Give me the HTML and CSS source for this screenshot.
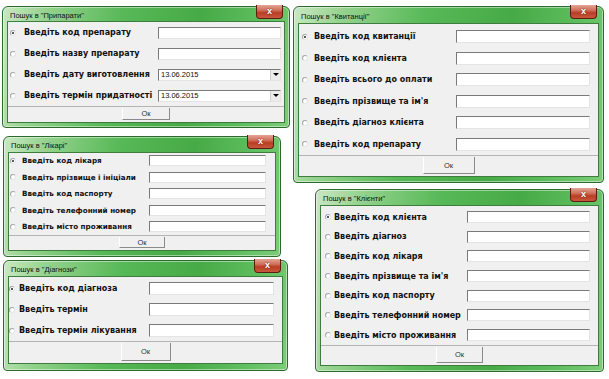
FILE: index.html
```html
<!DOCTYPE html>
<html lang="uk">
<head>
    <meta charset="UTF-8">
    <title>Пошук</title>
    <link rel="stylesheet" href="styles.css">
</head>
<body>
<div class="desktop">

    <section class="win win-prep">
        <header class="titlebar">
            <span class="title">Пошук в "Припарати"</span>
            <span class="close">x</span>
        </header>
        <div class="client">
            <div class="rows">
                <div class="row"><span class="radio checked"></span><span class="lbl">Введіть код препарату</span><span class="field"></span></div>
                <div class="row"><span class="radio"></span><span class="lbl">Введіть назву препарату</span><span class="field"></span></div>
                <div class="row"><span class="radio"></span><span class="lbl">Введіть дату виготовлення</span><span class="field combo"><span class="val">13.06.2015</span><span class="drop"></span></span></div>
                <div class="row"><span class="radio"></span><span class="lbl">Введіть термін придатності</span><span class="field combo"><span class="val">13.06.2015</span><span class="drop"></span></span></div>
            </div>
            <div class="footer"><span class="btn">Ок</span></div>
        </div>
    </section>

    <section class="win win-kvyt">
        <header class="titlebar">
            <span class="title">Пошук в "Квитанції"</span>
            <span class="close">x</span>
        </header>
        <div class="client">
            <div class="rows">
                <div class="row"><span class="radio checked"></span><span class="lbl">Введіть код квитанції</span><span class="field"></span></div>
                <div class="row"><span class="radio"></span><span class="lbl">Введіть код клієнта</span><span class="field"></span></div>
                <div class="row"><span class="radio"></span><span class="lbl">Введіть всього до оплати</span><span class="field"></span></div>
                <div class="row"><span class="radio"></span><span class="lbl">Введіть прізвище та ім'я</span><span class="field"></span></div>
                <div class="row"><span class="radio"></span><span class="lbl">Введіть діагноз клієнта</span><span class="field"></span></div>
                <div class="row"><span class="radio"></span><span class="lbl">Введіть код препарату</span><span class="field"></span></div>
            </div>
            <div class="footer"><span class="btn">Ок</span></div>
        </div>
    </section>

    <section class="win win-likar">
        <header class="titlebar">
            <span class="title">Пошук в "Лікарі"</span>
            <span class="close">x</span>
        </header>
        <div class="client">
            <div class="rows">
                <div class="row"><span class="radio checked"></span><span class="lbl">Введіть код лікаря</span><span class="field"></span></div>
                <div class="row"><span class="radio"></span><span class="lbl">Введіть прізвище і ініціали</span><span class="field"></span></div>
                <div class="row"><span class="radio"></span><span class="lbl">Введіть код паспорту</span><span class="field"></span></div>
                <div class="row"><span class="radio"></span><span class="lbl">Введіть телефонний номер</span><span class="field"></span></div>
                <div class="row"><span class="radio"></span><span class="lbl">Введіть місто проживання</span><span class="field"></span></div>
            </div>
            <div class="footer"><span class="btn">Ок</span></div>
        </div>
    </section>

    <section class="win win-diag">
        <header class="titlebar">
            <span class="title">Пошук в "Діагнози"</span>
            <span class="close">x</span>
        </header>
        <div class="client">
            <div class="rows">
                <div class="row"><span class="radio checked"></span><span class="lbl">Введіть код діагноза</span><span class="field"></span></div>
                <div class="row"><span class="radio"></span><span class="lbl">Введіть термін</span><span class="field"></span></div>
                <div class="row"><span class="radio"></span><span class="lbl">Введіть термін лікування</span><span class="field"></span></div>
            </div>
            <div class="footer"><span class="btn">Ок</span></div>
        </div>
    </section>

    <section class="win win-klient">
        <header class="titlebar">
            <span class="title">Пошук в "Клієнти"</span>
            <span class="close">x</span>
        </header>
        <div class="client">
            <div class="rows">
                <div class="row"><span class="radio checked"></span><span class="lbl">Введіть код клієнта</span><span class="field"></span></div>
                <div class="row"><span class="radio"></span><span class="lbl">Введіть діагноз</span><span class="field"></span></div>
                <div class="row"><span class="radio"></span><span class="lbl">Введіть код лікаря</span><span class="field"></span></div>
                <div class="row"><span class="radio"></span><span class="lbl">Введіть прізвище та ім'я</span><span class="field"></span></div>
                <div class="row"><span class="radio"></span><span class="lbl">Введіть код паспорту</span><span class="field"></span></div>
                <div class="row"><span class="radio"></span><span class="lbl">Введіть телефонний номер</span><span class="field"></span></div>
                <div class="row"><span class="radio"></span><span class="lbl">Введіть місто проживання</span><span class="field"></span></div>
            </div>
            <div class="footer"><span class="btn">Ок</span></div>
        </div>
    </section>

</div>
</body>
</html>
```

FILE: styles.css
```css
* {
    box-sizing: border-box;
    margin: 0;
    padding: 0;
}
body {
    background: #ffffff;
    font-family: "Liberation Sans", Arial, sans-serif;
    color: #000;
}
.desktop {
    position: relative;
    width: 609px;
    height: 379px;
    overflow: hidden;
}

/* window frame */
.win {
    position: absolute;
    display: flex;
    flex-direction: column;
    border: 1px solid #2d6b2d;
    border-radius: 6px 6px 4px 4px;
    background: linear-gradient(100deg, #c9e8c3 0%, #96d38f 14%, #56b856 40%, #46aa46 65%, #5fbe5f 85%, #7ccc78 100%);
    box-shadow: inset 0 0 0 1px rgba(255, 255, 255, 0.45);
    padding: 0 var(--side) var(--bottom);
    --side: 4px;
    --bottom: 4px;
}
.titlebar {
    display: flex;
    align-items: center;
    justify-content: space-between;
    height: var(--title-h);
    padding-left: 3px;
    position: relative;
}
.title {
    font-family: "Liberation Sans", Arial, sans-serif;
    font-size: 7.5px;
    color: #111;
    margin-top: 2px;
}
.close {
    position: absolute;
    right: 2px;
    top: -2px;
    width: 27px;
    height: 14px;
    border: 1px solid #5b1d12;
    border-top: none;
    border-radius: 0 0 4px 4px;
    background: linear-gradient(180deg, #e3a595 0%, #d0705a 40%, #b83e24 60%, #c9573c 100%);
    color: #fff;
    font-size: 9px;
    font-weight: bold;
    line-height: 12px;
    text-align: center;
    text-shadow: 0 0 2px #5b1d12;
}

.client {
    flex: 1;
    display: flex;
    flex-direction: column;
    background: #f0f0f0;
    border: 1px solid #3e7d3e;
}
.rows {
    flex: 1;
    padding-top: var(--rows-top);
}
.row {
    display: flex;
    align-items: center;
    height: var(--row-h);
    padding-left: var(--rx);
    padding-right: var(--mr);
}
.radio {
    flex: none;
    width: 6px;
    height: 6px;
    border-radius: 50%;
    border: 1px solid #a8a8a8;
    border-right-color: #e6e6e6;
    border-bottom-color: #e6e6e6;
    background: #fff;
    margin-right: var(--rgap);
    position: relative;
}
.radio.checked::after {
    content: "";
    position: absolute;
    left: 1px;
    top: 1px;
    width: 2px;
    height: 2px;
    border-radius: 50%;
    background: #222;
}
.lbl {
    flex: none;
    width: var(--lbl-w);
    font-family: "DejaVu Sans", sans-serif;
    font-size: var(--fs);
    font-weight: bold;
    white-space: nowrap;
    color: #111;
}
.field {
    flex: 1;
    height: var(--field-h);
    background: #fff;
    border: 1px solid #e4e4e4;
    border-top-color: #7a7a7a;
    border-left-color: #7a7a7a;
    display: flex;
    align-items: center;
}
.combo .val {
    flex: 1;
    font-size: 7.5px;
    padding-left: 2px;
    color: #111;
}
.combo .drop {
    width: 10px;
    height: 100%;
    background: #ececec;
    border-left: 1px solid #d0d0d0;
    display: flex;
    align-items: center;
    justify-content: center;
}
.combo .drop::after {
    content: "";
    border-left: 3px solid transparent;
    border-right: 3px solid transparent;
    border-top: 3px solid #000;
}

.footer {
    height: var(--foot-h);
    border-top: 1px solid #b4b4b4;
    display: flex;
    justify-content: center;
    align-items: stretch;
    padding: 1px 0 2px;
}
.btn {
    width: var(--btn-w);
    border-left: 1px solid #fff;
    border-right: 1px solid #8a8a8a;
    border-bottom: 1px solid #8a8a8a;
    display: flex;
    align-items: center;
    justify-content: center;
    font-size: 7.5px;
    color: #333;
}

/* individual windows */
.win-prep {
    left: 2px;
    top: 6px;
    width: 288px;
    height: 122px;
    --title-h: 18px;
    --rows-top: 0px;
    --row-h: 21px;
    --rx: 2px;
    --rgap: 8px;
    --lbl-w: 134px;
    --mr: 3px;
    --field-h: 12px;
    --fs: 8px;
    --foot-h: 16px;
    --btn-w: 48px;
}
.win-kvyt {
    left: 293px;
    top: 6px;
    width: 311px;
    height: 177px;
    --title-h: 20px;
    --rows-top: 2px;
    --row-h: 21.5px;
    --rx: 3px;
    --rgap: 6px;
    --lbl-w: 142px;
    --mr: 8px;
    --field-h: 13px;
    --fs: 8px;
    --foot-h: 21px;
    --btn-w: 52px;
    --bottom: 5px;
}
.win-likar {
    left: 3px;
    top: 136px;
    width: 278px;
    height: 121px;
    --title-h: 18px;
    --rows-top: 0px;
    --row-h: 16.5px;
    --rx: 1px;
    --rgap: 6px;
    --lbl-w: 127px;
    --mr: 9px;
    --field-h: 11px;
    --fs: 7.2px;
    --foot-h: 15px;
    --btn-w: 46px;
    --bottom: 5px;
}
.win-diag {
    left: 3px;
    top: 260px;
    width: 285px;
    height: 111px;
    --title-h: 18px;
    --rows-top: 1px;
    --row-h: 21px;
    --rx: 0px;
    --rgap: 4px;
    --lbl-w: 130px;
    --mr: 8px;
    --field-h: 13px;
    --fs: 8px;
    --foot-h: 22px;
    --btn-w: 50px;
    --bottom: 6px;
}
.win-klient {
    left: 315px;
    top: 189px;
    width: 289px;
    height: 183px;
    --title-h: 19px;
    --rows-top: 1px;
    --row-h: 19.7px;
    --rx: 4px;
    --rgap: 3px;
    --lbl-w: 133px;
    --mr: 8px;
    --field-h: 12px;
    --fs: 8px;
    --foot-h: 20px;
    --btn-w: 47px;
    --bottom: 5px;
}
```
